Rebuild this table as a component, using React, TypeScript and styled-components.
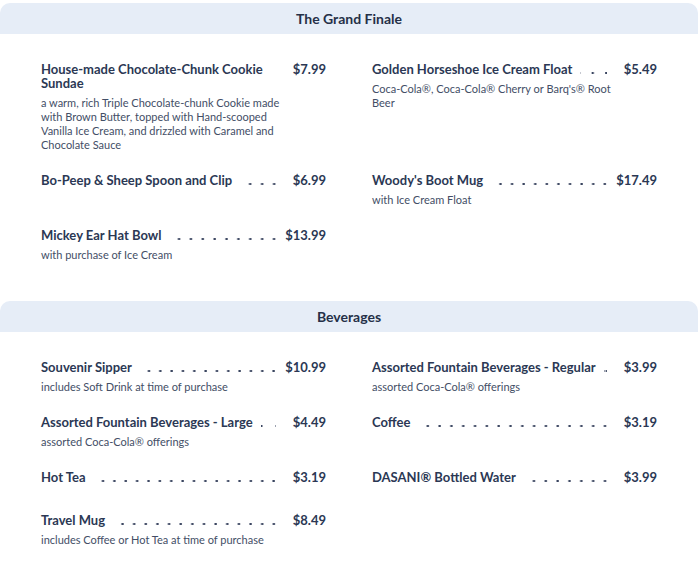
import React from "react";
import styled, { createGlobalStyle } from "styled-components";

type Item = {
  name: string;
  price: string;
  description?: string;
};

type Section = {
  title: string;
  items: (Item | null)[];
};

const sections: Section[] = [
  {
    title: "The Grand Finale",
    items: [
      {
        name: "House-made Chocolate-Chunk Cookie Sundae",
        price: "$7.99",
        description:
          "a warm, rich Triple Chocolate-chunk Cookie made with Brown Butter, topped with Hand-scooped Vanilla Ice Cream, and drizzled with Caramel and Chocolate Sauce",
      },
      {
        name: "Golden Horseshoe Ice Cream Float",
        price: "$5.49",
        description: "Coca-Cola®, Coca-Cola® Cherry or Barq's® Root Beer",
      },
      { name: "Bo-Peep & Sheep Spoon and Clip", price: "$6.99" },
      { name: "Woody's Boot Mug", price: "$17.49", description: "with Ice Cream Float" },
      { name: "Mickey Ear Hat Bowl", price: "$13.99", description: "with purchase of Ice Cream" },
      null,
    ],
  },
  {
    title: "Beverages",
    items: [
      {
        name: "Souvenir Sipper",
        price: "$10.99",
        description: "includes Soft Drink at time of purchase",
      },
      {
        name: "Assorted Fountain Beverages - Regular",
        price: "$3.99",
        description: "assorted Coca-Cola® offerings",
      },
      {
        name: "Assorted Fountain Beverages - Large",
        price: "$4.49",
        description: "assorted Coca-Cola® offerings",
      },
      { name: "Coffee", price: "$3.19" },
      { name: "Hot Tea", price: "$3.19" },
      { name: "DASANI® Bottled Water", price: "$3.99" },
      {
        name: "Travel Mug",
        price: "$8.49",
        description: "includes Coffee or Hot Tea at time of purchase",
      },
      null,
    ],
  },
];

const GlobalStyle = createGlobalStyle`
  body {
    margin: 0;
    padding-top: 3px;
    background: #fff;
    font-family: Lato, "Open Sans", sans-serif;
    color: #2b3854;
  }
`;

const MenuItem = ({ item }: { item: Item }) => (
  <ItemBox $bare={!item.description}>
    <ItemHeader>
      <ItemName>{item.name}</ItemName>
      <Leader />
      <ItemPrice>{item.price}</ItemPrice>
    </ItemHeader>
    {item.description && <ItemDescription>{item.description}</ItemDescription>}
  </ItemBox>
);

const App = () => {
  return (
    <>
      <GlobalStyle />
      <Menu>
        {sections.map((section) => (
          <MenuSection key={section.title}>
            <SectionHeader>{section.title}</SectionHeader>
            <ItemGrid>
              {section.items.map((item, i) =>
                item ? <MenuItem key={item.name} item={item} /> : <div key={i} />
              )}
            </ItemGrid>
          </MenuSection>
        ))}
      </Menu>
    </>
  );
};

const Menu = styled.div`
  width: 698px;
`;

const MenuSection = styled.section`
  &:not(:last-child) {
    padding-bottom: 39px;
  }
`;

const SectionHeader = styled.h2`
  margin: 0;
  height: 31px;
  line-height: 31px;
  text-align: center;
  background-color: #e6edf7;
  border-radius: 10px 10px 0 0;
  font-size: 14px;
  font-weight: 700;
  color: #253048;
`;

const ItemGrid = styled.div`
  display: grid;
  grid-template-columns: 285px 285px;
  column-gap: 46px;
  row-gap: 21px;
  padding: 28px 0 0 41px;
`;

const ItemBox = styled.div<{ $bare: boolean }>`
  margin-bottom: ${(p) => (p.$bare ? "8px" : "0")};
`;

const ItemHeader = styled.div`
  display: flex;
  align-items: flex-start;
`;

const ItemName = styled.span`
  flex: 0 1 auto;
  min-width: 0;
  margin-right: 8px;
  font-size: 13px;
  line-height: 14px;
  font-weight: 700;
  color: #2b3854;
`;

/* dotted leader: whole dots only, last one at the right end */
const Leader = styled.span`
  flex: 1 1 0;
  min-width: 0;
  height: 14px;
  margin-right: 3px;
  background-image: radial-gradient(
    circle at 80% 11px,
    #3a4560 0.9px,
    transparent 1.5px
  );
  background-size: 11.5px 14px;
  background-repeat: round no-repeat;
  background-position: right top;
`;

const ItemPrice = styled.span`
  flex: none;
  width: 47px;
  text-align: right;
  font-size: 13px;
  line-height: 14px;
  font-weight: 700;
  color: #2b3854;
`;

const ItemDescription = styled.p`
  margin: 6px 0 0;
  padding-right: 40px;
  font-size: 11px;
  line-height: 14px;
  color: #434e66;
`;

export default App;
